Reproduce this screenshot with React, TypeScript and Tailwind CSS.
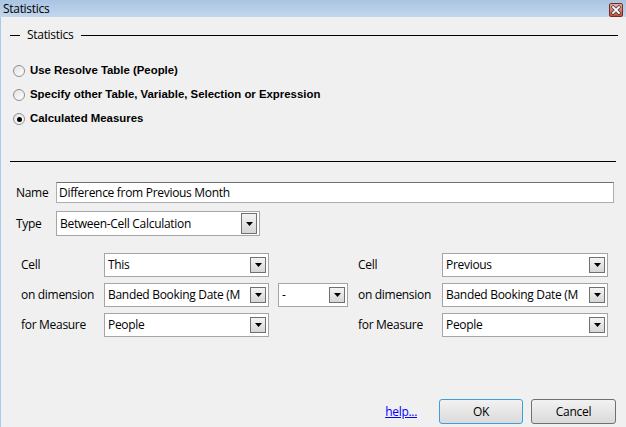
import React from "react";

const ui = "font-['Open_Sans','Liberation_Sans',sans-serif] tracking-[-0.3px]";

function Arrow({tall}: {tall?: boolean}): JSX.Element {
    return (
        <div className={`w-[16px] ${tall ? "h-[21px]" : "h-[16px]"} mr-[2px] border border-[#707070] bg-gradient-to-b from-[#f4f4f4] to-[#d6d6d6] flex items-center justify-center`}>
            <svg width="7" height="4" viewBox="0 0 7 4"><path d="M0 0h7L3.5 4z" fill="#000" /></svg>
        </div>
    );
}

function Select({value, className, tall}: {value: string; className: string; tall?: boolean}): JSX.Element {
    return (
        <div className={`border border-[#a5a5a5] bg-white flex items-center justify-between pl-[3px] ${className}`}>
            <span className="text-[12px] text-black whitespace-nowrap overflow-hidden">{value}</span>
            <Arrow tall={tall} />
        </div>
    );
}

function Radio({label, checked}: {label: string; checked?: boolean}): JSX.Element {
    return (
        <div className="h-[24px] flex items-center pl-[12px]">
            <div className="w-[12px] h-[12px] rounded-full border border-[#8e8f8f] bg-gradient-to-br from-[#e2e2e2] to-white flex items-center justify-center">
                {checked && <div className="w-[5px] h-[5px] rounded-full bg-black" />}
            </div>
            <span className="ml-[5px] text-[11.4px] font-bold text-black tracking-normal font-['Liberation_Sans',sans-serif]">{label}</span>
        </div>
    );
}

function CellRow({label, value, rightLabel, rightValue, extra}: {label: string; value: string; rightLabel: string; rightValue: string; extra?: boolean}): JSX.Element {
    return (
        <div className="flex items-center h-[24px] pl-[20px]">
            <span className="w-[83px] text-[12px] text-black">{label}</span>
            <Select value={value} className="w-[165px] h-[24px]" />
            {extra ? <Select value="-" className="w-[70px] h-[24px] ml-[9px]" /> : <div className="w-[70px] ml-[9px]" />}
            <span className="w-[84px] ml-[10px] text-[12px] text-black">{rightLabel}</span>
            <Select value={rightValue} className="w-[166px] h-[24px]" />
        </div>
    );
}

export default function App(): JSX.Element {
    return (
        <div className={`w-[626px] h-[427px] bg-[#f0f0f0] flex flex-col overflow-hidden ${ui}`}>
            <div className="h-[17px] flex items-center justify-between bg-gradient-to-b from-[#a9c4e2] to-[#c4d7ee]">
                <span className="pl-[3px] text-[12px] text-black leading-none">Statistics</span>
                <svg className="mr-[3px] mt-[3px]" width="14" height="14" viewBox="0 0 14 14">
                    <defs>
                        <linearGradient id="closeFill" x1="0" y1="0" x2="0" y2="1">
                            <stop offset="0" stopColor="#e8b3a8" />
                            <stop offset="1" stopColor="#c24b3a" />
                        </linearGradient>
                    </defs>
                    <rect x="0.5" y="0.5" width="13" height="13" rx="1.5" fill="url(#closeFill)" stroke="#7b2a22" />
                    <path d="M4 4l6 6M10 4l-6 6" stroke="#3a3a3a" strokeWidth="3.2" strokeLinecap="square" />
                    <path d="M4 4l6 6M10 4l-6 6" stroke="#fff" strokeWidth="1.8" strokeLinecap="square" />
                </svg>
            </div>

            <div className="flex-1 flex flex-col border-l border-[#a9c9ee]">
                <div className="flex items-center mt-[10px] h-[16px]">
                    <div className="ml-[9px] w-[10px] h-px bg-black" />
                    <span className="ml-[7px] text-[12px] text-black">Statistics</span>
                    <div className="ml-[8px] mr-[8px] flex-1 h-px bg-black" />
                </div>

                <div className="mt-[16px] flex flex-col">
                    <Radio label="Use Resolve Table (People)" />
                    <Radio label="Specify other Table, Variable, Selection or Expression" />
                    <Radio label="Calculated Measures" checked />
                </div>

                <div className="mt-[30px] ml-[9px] mr-[10px] h-px bg-black" />

                <div className="mt-[20px] flex items-center pl-[15px] pr-[12px]">
                    <span className="w-[40px] text-[12px] text-black">Name</span>
                    <div className="flex-1 h-[21px] border border-[#abadb3] border-t-[#707070] bg-white flex items-center pl-[2px]">
                        <span className="text-[12px] text-black">Difference from Previous Month</span>
                    </div>
                </div>

                <div className="mt-[8px] flex items-center pl-[15px]">
                    <span className="w-[40px] text-[12px] text-black">Type</span>
                    <Select value="Between-Cell Calculation" className="w-[204px] h-[25px]" tall />
                </div>

                <div className="mt-[17px] flex flex-col gap-[6px]">
                    <CellRow label="Cell" value="This" rightLabel="Cell" rightValue="Previous" />
                    <CellRow label="on dimension" value="Banded Booking Date (M" rightLabel="on dimension" rightValue="Banded Booking Date (M" extra />
                    <CellRow label="for Measure" value="People" rightLabel="for Measure" rightValue="People" />
                </div>

                <div className="mt-[62px] flex items-center justify-end pr-[10px]">
                    <a href="#" className="text-[12px] text-[#0000ff] underline mr-[22px]">help...</a>
                    <button className="w-[84px] h-[25px] rounded-[3px] border border-[#3c9fdc] bg-gradient-to-b from-[#f2f2f2] to-[#dadada] text-[12px] text-black">OK</button>
                    <button className="ml-[8px] w-[85px] h-[25px] rounded-[3px] border border-[#707070] bg-gradient-to-b from-[#f2f2f2] to-[#dadada] text-[12px] text-black">Cancel</button>
                </div>
            </div>
        </div>
    );
}
